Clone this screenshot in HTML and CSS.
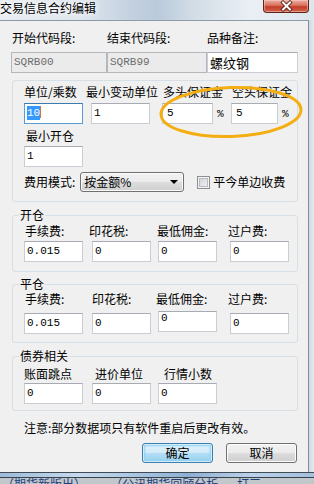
FILE: index.html
```html
<!DOCTYPE html>
<html lang="zh-CN">
<head>
  <meta charset="UTF-8">
  <title>交易信息合约编辑</title>
  <link rel="stylesheet" href="styles.css">
</head>
<body>

  <!-- 标题栏 -->
  <div class="titlebar">
    <span class="title">交易信息合约编辑</span>
    <div class="close-btn">
      <svg width="44" height="12" viewBox="0 0 44 12">
        <path d="M19 2.5 L26 9.5 M26 2.5 L19 9.5" stroke="#4a1a12" stroke-width="3.6" stroke-linecap="square"/>
        <path d="M19 2.5 L26 9.5 M26 2.5 L19 9.5" stroke="#fff" stroke-width="2" stroke-linecap="square"/>
      </svg>
    </div>
  </div>

  <div class="main">
    <div class="client">

      <!-- 代码段 -->
      <div class="top-row">
        <div class="top-field">
          <span class="lbl first">开始代码段:</span>
          <div class="text-box disabled">SQRB00</div>
        </div>
        <div class="top-field">
          <span class="lbl">结束代码段:</span>
          <div class="text-box disabled">SQRB99</div>
        </div>
        <div class="top-field">
          <span class="lbl">品种备注:</span>
          <div class="text-box cjk">螺纹钢</div>
        </div>
      </div>

      <!-- 单位 / 保证金 -->
      <div class="group unit-group">
        <div class="unit-grid">
          <span class="lbl">单位/乘数</span>
          <span class="lbl pull4">最小变动单位</span>
          <span class="lbl push1">多头保证金</span>
          <span class="lbl push1">空头保证金</span>
          <div class="text-box w59 focused"><span class="sel">10</span><span class="caret"></span></div>
          <div class="text-box w59 push1">1</div>
          <div class="pct-field"><div class="text-box w51 pad4">5</div><span class="pct">%</span></div>
          <div class="pct-field"><div class="text-box w47 pad4">5</div><span class="pct">%</span></div>
        </div>

        <span class="lbl min-open">最小开仓</span>
        <div class="text-box w59 min-open-box">1</div>

        <div class="mode-row">
          <span class="lbl">费用模式:</span>
          <div class="combo"><span>按金额%</span><span class="arrow"></span></div>
          <span class="check"></span>
          <span class="lbl check-lbl">平今单边收费</span>
        </div>
      </div>

      <!-- 开仓 -->
      <fieldset class="group fee-group open-group">
        <legend>开仓</legend>
        <div class="fee-grid">
          <span class="lbl push1">手续费:</span>
          <span class="lbl pull3">印花税:</span>
          <span class="lbl pull1">最低佣金:</span>
          <span class="lbl pull2">过户费:</span>
          <div class="text-box w59">0.015</div>
          <div class="text-box w59">0</div>
          <div class="text-box w59">0</div>
          <div class="text-box w59">0</div>
        </div>
      </fieldset>

      <!-- 平仓 -->
      <fieldset class="group fee-group close-group">
        <legend>平仓</legend>
        <div class="fee-grid">
          <span class="lbl push1">手续费:</span>
          <span class="lbl">印花税:</span>
          <span class="lbl pull2">最低佣金:</span>
          <span class="lbl pull2">过户费:</span>
          <div class="text-box w59">0.015</div>
          <div class="text-box w59">0</div>
          <div class="text-box w59 raised">0</div>
          <div class="text-box w59">0</div>
        </div>
      </fieldset>

      <!-- 债券相关 -->
      <fieldset class="group fee-group bond-group">
        <legend>债券相关</legend>
        <div class="fee-grid">
          <span class="lbl">账面跳点</span>
          <span class="lbl push3">进价单位</span>
          <span class="lbl push6">行情小数</span>
          <span></span>
          <div class="text-box w59">0</div>
          <div class="text-box w59">0</div>
          <div class="text-box w59">0</div>
        </div>
      </fieldset>

      <p class="note">注意:部分数据项只有软件重启后更改有效。</p>

      <div class="buttons">
        <div class="btn default">确定</div>
        <div class="btn">取消</div>
      </div>

      <!-- 标注圈 -->
      <svg class="mark" width="160" height="70" viewBox="0 0 160 70">
        <ellipse cx="80" cy="35" rx="70" ry="24.5" fill="none" stroke="#f5ae12" stroke-width="3" transform="rotate(-2 80 35)"/>
      </svg>
    </div>
    <div class="frame-right"></div>
  </div>

  <div class="frame-bottom"></div>
  <div class="behind">（期货新版出）&nbsp;&nbsp;&nbsp;&nbsp;&nbsp;&nbsp;&nbsp;&nbsp;&nbsp;（公讯期货回顾分析&nbsp;&nbsp;&nbsp;&nbsp;&nbsp;&nbsp;&nbsp;打三</div>

</body>
</html>
```

FILE: styles.css
```css
* {
  margin: 0;
  padding: 0;
  box-sizing: border-box;
}

body {
  width: 314px;
  height: 484px;
  overflow: hidden;
  font-family: "Noto Sans CJK SC", "Noto Sans", sans-serif;
  font-size: 12px;
  color: #000;
  background: #c9cdd2;
}

/* 标题栏 */
.titlebar {
  height: 20px;
  display: flex;
  justify-content: space-between;
  align-items: flex-start;
  background: linear-gradient(90deg, #e8edf2 0%, #dfe6ed 25%, #c3d1df 42%, #b9cadb 50%, #d3dde7 62%, #eaeff4 80%, #dde5ed 100%);
}

.title {
  line-height: 14px;
  padding-top: 1px;
  text-shadow: 0 0 5px #fff, 0 0 8px #fff;
}

.close-btn {
  width: 46px;
  height: 13px;
  margin-right: 5px;
  border: 1px solid #5e241a;
  border-top: none;
  border-radius: 0 0 4px 4px;
  background: linear-gradient(#eab0a3 0%, #d8715c 45%, #c43e28 55%, #d0614b 100%);
  box-shadow: inset 0 0 0 1px rgba(255, 210, 200, 0.5);
}

.close-btn svg {
  display: block;
}

.main {
  display: flex;
  height: 452px;
}

.client {
  position: relative;
  width: 308px;
  background: #f0f0f0;
  border-top: 1px solid #8d9aa7;
}

.frame-right {
  flex: 1;
  background: linear-gradient(90deg, #cfd9e3, #e4eaf0);
  border-left: 1px solid #7f8e9d;
}

.frame-bottom {
  height: 6px;
  background: linear-gradient(90deg, #9dbad8 0%, #c6daee 25%, #a9c3df 45%, #8eafd2 60%, #bcd2e9 80%, #a3bfdc 100%);
  border-top: 1px solid #3f4b57;
  border-bottom: 1px solid #37424d;
}

.behind {
  height: 6px;
  overflow: hidden;
  padding-left: 2px;
  color: #1d3f7c;
  font-size: 12px;
  line-height: 12px;
  white-space: nowrap;
  background: #c2c7cc;
}

/* 通用 */
.lbl {
  line-height: 16px;
  white-space: nowrap;
}

.text-box {
  height: 21px;
  padding-left: 2px;
  border: 1px solid #c9ced5;
  border-top-color: #a7acb4;
  background: #fff;
  font-family: "Liberation Mono", monospace;
  font-size: 11px;
  line-height: 19px;
  white-space: nowrap;
}

.text-box.pad4 {
  padding-left: 4px;
}

.text-box.disabled {
  background: #ebebeb;
  border-color: #b4b8bd;
  color: #6d6d6d;
}

.text-box.cjk {
  font-family: "Noto Sans CJK SC", sans-serif;
  font-size: 13px;
}

.text-box.focused {
  border-color: #5b9bd5;
  border-top-color: #3d7bad;
}

.sel {
  background: #3399ff;
  color: #fff;
  padding: 1px 0;
}

.caret {
  display: inline-block;
  width: 1px;
  height: 12px;
  vertical-align: -2px;
  background: #e0702a;
}

.w59 { width: 59px; }
.w51 { width: 51px; }
.w47 { width: 47px; }

.push1 { margin-left: 1px; }
.push3 { margin-left: 3px; }
.push6 { margin-left: 6px; }
.pull1 { margin-left: -1px; }
.pull2 { margin-left: -2px; }
.pull3 { margin-left: -3px; }
.pull4 { margin-left: -4px; }

/* 代码段 */
.top-row {
  display: grid;
  grid-template-columns: 96px 100px 91px;
  padding: 9px 0 0 11px;
}

.top-field {
  display: flex;
  flex-direction: column;
  gap: 6px;
}

.top-field .first {
  margin-left: 1px;
}

/* 分组框 */
.group {
  width: 286px;
  margin-left: 12px;
  border: 1px solid #d5dfe5;
  border-radius: 3px;
  padding-left: 11px;
  min-width: 0;
}

.group legend {
  margin-left: -5px;
  padding: 0 1px;
  line-height: 14px;
}

.unit-group {
  margin-top: 7px;
  padding-top: 3px;
  padding-bottom: 9px;
}

.unit-grid {
  display: grid;
  grid-template-columns: 66px 72px 69px 1fr;
  row-gap: 3px;
}

.pct-field {
  display: flex;
  align-items: center;
}

.pct {
  margin-left: 4px;
  font-family: "Liberation Mono", monospace;
  font-size: 11px;
}

.min-open {
  display: block;
  margin: 4px 0 0 2px;
}

.min-open-box {
  margin-top: 2px;
}

.mode-row {
  display: flex;
  align-items: center;
  margin-top: 5px;
  height: 20px;
}

.combo {
  width: 104px;
  height: 20px;
  margin-left: 5px;
  padding: 0 4px 0 3px;
  display: flex;
  align-items: center;
  justify-content: space-between;
  border: 1px solid #707070;
  border-radius: 3px;
  background: linear-gradient(#f2f2f2 0%, #ebebeb 50%, #dddddd 51%, #cfcfcf 100%);
  box-shadow: inset 0 0 0 1px #fbfbfb;
  line-height: 16px;
}

.arrow {
  width: 0;
  height: 0;
  margin-right: 1px;
  border-left: 4px solid transparent;
  border-right: 4px solid transparent;
  border-top: 4px solid #000;
}

.check {
  width: 13px;
  height: 13px;
  margin-left: 13px;
  border: 1px solid #8e8f8f;
  background: linear-gradient(135deg, #cbcfd5, #f6f6f6);
  box-shadow: inset 0 0 0 1px #f4f4f4, inset 0 0 0 2px #b8bcc2;
}

.check-lbl {
  margin-left: 3px;
}

/* 费用 */
.fee-grid {
  display: grid;
  grid-template-columns: 68px 66px 72px 1fr;
}

.open-group {
  margin-top: 6px;
  padding-top: 1px;
  padding-bottom: 9px;
}

.open-group .fee-grid {
  row-gap: 2px;
}

.close-group {
  margin-top: 5px;
  padding-bottom: 8px;
}

.close-group .fee-grid {
  row-gap: 6px;
}

.text-box.raised {
  margin-top: -2px;
  line-height: 13px;
}

.bond-group {
  margin-top: 6px;
  padding-top: 3px;
  padding-bottom: 6px;
}

.bond-group .fee-grid {
  row-gap: 1px;
}

.note {
  margin-top: 9px;
  padding-left: 24px;
  line-height: 16px;
}

/* 按钮 */
.buttons {
  display: flex;
  justify-content: flex-end;
  gap: 13px;
  margin-top: 7px;
  padding-right: 11px;
}

.btn {
  width: 71px;
  height: 20px;
  border: 1px solid #707070;
  border-radius: 3px;
  background: linear-gradient(#f2f2f2 0%, #ebebeb 50%, #dddddd 51%, #cfcfcf 100%);
  box-shadow: inset 0 0 0 1px #fcfcfc;
  text-align: center;
  line-height: 18px;
}

.btn.default {
  border-color: #3c7fb1;
  background: linear-gradient(#e3f3fb 0%, #cfeaf8 50%, #b3def5 51%, #9ad1ef 100%);
  box-shadow: inset 0 0 0 1px #d2ecfa, inset 0 0 2px 2px #8fd0f2;
}

/* 标注 */
.mark {
  position: absolute;
  left: 151px;
  top: 56px;
}
```
